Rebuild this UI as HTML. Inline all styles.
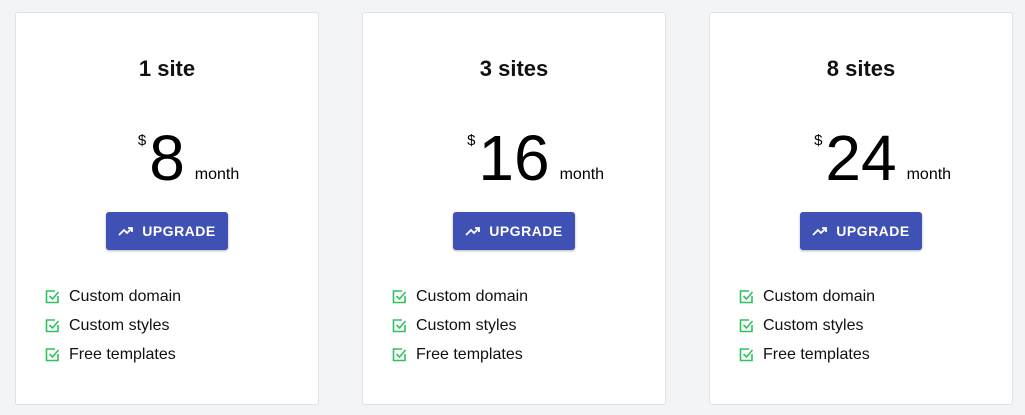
<!DOCTYPE html>
<html><head><style>
body{margin:0;width:1025px;height:415px;background:#f3f4f6;font-family:"Liberation Sans",Arial,sans-serif;position:relative;overflow:hidden}
.card{position:absolute;top:12px;width:304px;height:393px;background:#fff;border:1px solid #dfe1e4;border-radius:3px;box-sizing:border-box}
.t{position:absolute;top:43px;left:0;right:0;text-align:center;font-size:22px;font-weight:bold;color:#111}
.p{position:absolute;top:105px;left:0;right:0;text-align:center;white-space:nowrap;color:#000}
.p .w{position:relative;display:inline-block}
.p .d{font-size:15px;position:absolute;right:100%;margin-right:3px;top:14px}
.p .n{font-size:64px;line-height:80px}
.p .m{font-size:16px;position:absolute;left:100%;margin-left:10px;top:48px}
.b{position:absolute;top:199px;left:90px;width:122px;height:38px;background:#3f51b5;border-radius:3px;color:#fff;font-size:14px;font-weight:bold;letter-spacing:.5px;display:flex;align-items:center;justify-content:center;box-shadow:0 1px 2px rgba(0,0,0,.3)}
.b svg{margin-right:8px}
ul{position:absolute;top:269px;left:29px;margin:0;padding:0;list-style:none}
li{height:29px;font-size:16px;color:#111;display:flex;align-items:center}
li svg{margin-right:9px}
</style></head><body>
<div class="card" style="left:15px"><div class="t">1 site</div><div class="p"><span class="w"><span class="d">$</span><span class="n">8</span><span class="m">month</span></span></div>
<div class="b"><svg width="16" height="12" viewBox="0 0 16 12"><path d="M1 10l5-5 3 3 5-5M10 3h4v4" stroke="#fff" stroke-width="1.8" fill="none"/></svg>UPGRADE</div>
<ul><li><svg width="15" height="15" viewBox="0 0 15 15"><path d="M13 7v6.5H1.5V2H10" stroke="#2ec25f" stroke-width="1.6" fill="none"/><path d="M4.5 7l3 3 6-7" stroke="#2ec25f" stroke-width="1.6" fill="none"/></svg>Custom domain</li><li><svg width="15" height="15" viewBox="0 0 15 15"><path d="M13 7v6.5H1.5V2H10" stroke="#2ec25f" stroke-width="1.6" fill="none"/><path d="M4.5 7l3 3 6-7" stroke="#2ec25f" stroke-width="1.6" fill="none"/></svg>Custom styles</li><li><svg width="15" height="15" viewBox="0 0 15 15"><path d="M13 7v6.5H1.5V2H10" stroke="#2ec25f" stroke-width="1.6" fill="none"/><path d="M4.5 7l3 3 6-7" stroke="#2ec25f" stroke-width="1.6" fill="none"/></svg>Free templates</li></ul></div>
<div class="card" style="left:362px"><div class="t">3 sites</div><div class="p"><span class="w"><span class="d">$</span><span class="n">16</span><span class="m">month</span></span></div>
<div class="b"><svg width="16" height="12" viewBox="0 0 16 12"><path d="M1 10l5-5 3 3 5-5M10 3h4v4" stroke="#fff" stroke-width="1.8" fill="none"/></svg>UPGRADE</div>
<ul><li><svg width="15" height="15" viewBox="0 0 15 15"><path d="M13 7v6.5H1.5V2H10" stroke="#2ec25f" stroke-width="1.6" fill="none"/><path d="M4.5 7l3 3 6-7" stroke="#2ec25f" stroke-width="1.6" fill="none"/></svg>Custom domain</li><li><svg width="15" height="15" viewBox="0 0 15 15"><path d="M13 7v6.5H1.5V2H10" stroke="#2ec25f" stroke-width="1.6" fill="none"/><path d="M4.5 7l3 3 6-7" stroke="#2ec25f" stroke-width="1.6" fill="none"/></svg>Custom styles</li><li><svg width="15" height="15" viewBox="0 0 15 15"><path d="M13 7v6.5H1.5V2H10" stroke="#2ec25f" stroke-width="1.6" fill="none"/><path d="M4.5 7l3 3 6-7" stroke="#2ec25f" stroke-width="1.6" fill="none"/></svg>Free templates</li></ul></div>
<div class="card" style="left:709px"><div class="t">8 sites</div><div class="p"><span class="w"><span class="d">$</span><span class="n">24</span><span class="m">month</span></span></div>
<div class="b"><svg width="16" height="12" viewBox="0 0 16 12"><path d="M1 10l5-5 3 3 5-5M10 3h4v4" stroke="#fff" stroke-width="1.8" fill="none"/></svg>UPGRADE</div>
<ul><li><svg width="15" height="15" viewBox="0 0 15 15"><path d="M13 7v6.5H1.5V2H10" stroke="#2ec25f" stroke-width="1.6" fill="none"/><path d="M4.5 7l3 3 6-7" stroke="#2ec25f" stroke-width="1.6" fill="none"/></svg>Custom domain</li><li><svg width="15" height="15" viewBox="0 0 15 15"><path d="M13 7v6.5H1.5V2H10" stroke="#2ec25f" stroke-width="1.6" fill="none"/><path d="M4.5 7l3 3 6-7" stroke="#2ec25f" stroke-width="1.6" fill="none"/></svg>Custom styles</li><li><svg width="15" height="15" viewBox="0 0 15 15"><path d="M13 7v6.5H1.5V2H10" stroke="#2ec25f" stroke-width="1.6" fill="none"/><path d="M4.5 7l3 3 6-7" stroke="#2ec25f" stroke-width="1.6" fill="none"/></svg>Free templates</li></ul></div>
</body></html>
